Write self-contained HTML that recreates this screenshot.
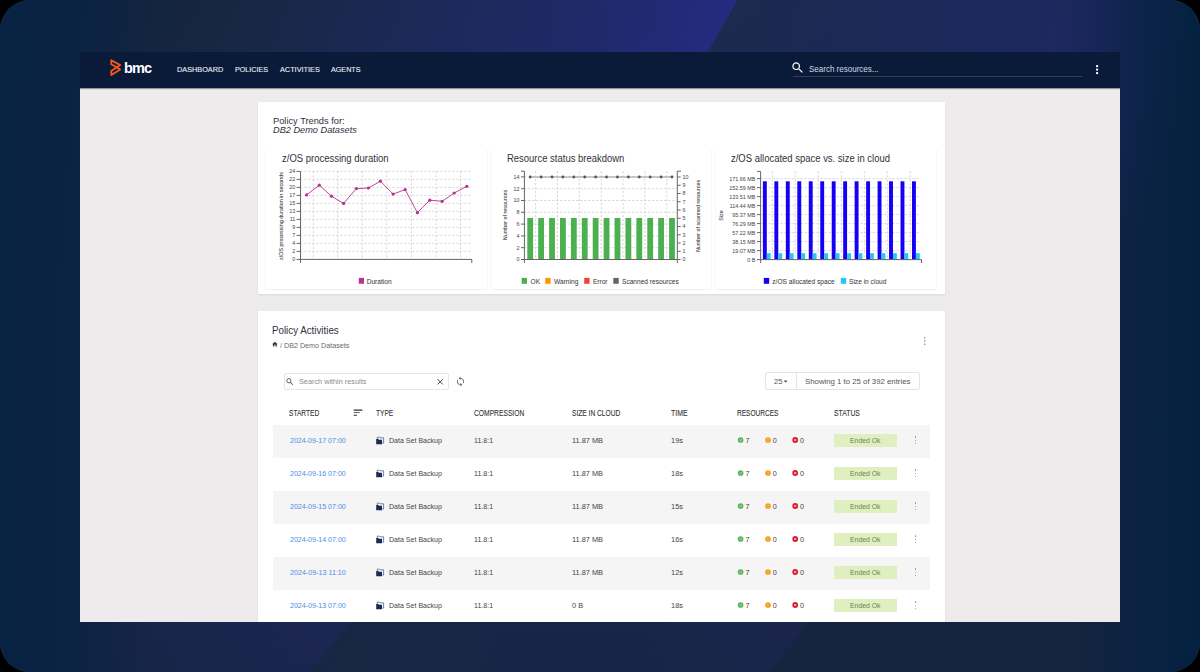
<!DOCTYPE html>
<html><head><meta charset="utf-8"><title>BMC AMI Cloud - Policy Activities</title>
<style>
html,body{margin:0;padding:0;background:#000;}
body{width:1200px;height:672px;overflow:hidden;position:relative;font-family:"Liberation Sans", sans-serif;}
#bg{position:absolute;left:0;top:0;width:1200px;height:672px;border-radius:30px;overflow:hidden;}
#screen{position:absolute;left:0;top:0;width:1200px;height:672px;clip-path:inset(52px 80px 50px 80px);}
svg text{font-family:"Liberation Sans", sans-serif;}
</style></head><body>
<div id="bg"><svg width="1200" height="672" viewBox="0 0 1200 672">
<defs>
<linearGradient id="g1" gradientUnits="userSpaceOnUse" x1="0" y1="0" x2="524" y2="335">
<stop offset="0" stop-color="#0d2140"/>
<stop offset="0.3" stop-color="#172640"/>
<stop offset="0.55" stop-color="#1c2855"/>
<stop offset="0.78" stop-color="#1f2966"/>
<stop offset="1" stop-color="#262a80"/>
</linearGradient>
<linearGradient id="g2" gradientUnits="userSpaceOnUse" x1="524" y1="335" x2="1175" y2="750">
<stop offset="0" stop-color="#1b2a4e"/>
<stop offset="0.2" stop-color="#1d2859"/>
<stop offset="0.35" stop-color="#1e285e"/>
<stop offset="0.5" stop-color="#23286e"/>
<stop offset="0.6" stop-color="#17243f"/>
<stop offset="1" stop-color="#0d2140"/>
</linearGradient>
<linearGradient id="g3" gradientUnits="userSpaceOnUse" x1="0" y1="420" x2="0" y2="622">
<stop offset="0" stop-color="#17243f" stop-opacity="0"/>
<stop offset="1" stop-color="#17243f" stop-opacity="1"/>
</linearGradient>
<linearGradient id="gv" gradientUnits="userSpaceOnUse" x1="0" y1="0" x2="0" y2="672">
<stop offset="0" stop-color="#17243f" stop-opacity="0"/>
<stop offset="0.5" stop-color="#17243f" stop-opacity="0.35"/>
<stop offset="1" stop-color="#17243f" stop-opacity="0.75"/>
</linearGradient>
<linearGradient id="gl" gradientUnits="userSpaceOnUse" x1="0" y1="0" x2="1200" y2="0">
<stop offset="0" stop-color="#082242" stop-opacity="1"/>
<stop offset="0.06" stop-color="#082242" stop-opacity="0.75"/>
<stop offset="0.13" stop-color="#082242" stop-opacity="0.1"/>
<stop offset="0.18" stop-color="#082242" stop-opacity="0"/>
<stop offset="0.88" stop-color="#082242" stop-opacity="0"/>
<stop offset="0.955" stop-color="#082242" stop-opacity="0.85"/>
<stop offset="1" stop-color="#04213f" stop-opacity="1"/>
</linearGradient>
</defs>
<rect x="0" y="0" width="1200" height="672" fill="#17243f"/>
<path d="M-500,0 L738,0 Q413,564 309,672 L-500,672 Z" fill="url(#g1)"/>
<path d="M738,0 L1300,0 L1300,672 L309,672 Q413,564 738,0 Z" fill="url(#g2)"/>
<path d="M1196,0 L1300,0 L1300,672 L767,672 Q871,564 1196,0 Z" fill="url(#g3)"/>
<rect x="0" y="0" width="1200" height="672" fill="url(#gv)"/>
<rect x="0" y="0" width="1200" height="672" fill="url(#gl)"/>
</svg></div>
<div id="screen">
<div style="position:absolute;left:80px;top:52px;width:1040px;height:570px;background:#edebeb;"></div>
<div style="position:absolute;left:80px;top:52px;width:1040px;height:36px;background:#0a1b3a;box-shadow:0 1px 1px rgba(0,0,0,0.35);"></div>
<svg style="position:absolute;left:0;top:0" width="1200" height="100" viewBox="0 0 1200 100">
<path d="M111.3,60.2 L120.2,65.1 L116.7,67.3 L111.3,64.3 Z M116.7,67.3 L120.2,69.5 L111.3,75.1 L111.3,70.9 Z" fill="none" stroke="#ff5514" stroke-width="1.8" stroke-linejoin="round"/>
<path transform="translate(790.5,60.5) scale(0.6)" fill="#fff" d="M15.5 14h-.79l-.28-.27C15.41 12.59 16 11.11 16 9.5 16 5.91 13.09 3 9.5 3S3 5.91 3 9.5 5.91 16 9.5 16c1.61 0 3.09-.59 4.23-1.57l.27.28v.79l5 4.99L20.49 19l-4.99-5zm-6 0C7.01 14 5 11.99 5 9.5S7.01 5 9.5 5 14 7.01 14 9.5 11.99 14 9.5 14z"/>
<rect x="793" y="76" width="289" height="1" fill="#343e5c"/>
<rect x="1096.1" y="65.1" width="2" height="2" fill="#fff"/>
<rect x="1096.1" y="68.6" width="2" height="2" fill="#fff"/>
<rect x="1096.1" y="72.1" width="2" height="2" fill="#fff"/>
</svg>
<div style="position:absolute;left:124.00px;top:59.58px;font-size:14.5px;color:#ffffff;font-weight:bold;font-style:normal;letter-spacing:-0.9px;white-space:nowrap;line-height:normal;">bmc</div>
<div style="position:absolute;left:177.00px;top:65.06px;font-size:8.0px;color:#eceef3;font-weight:normal;font-style:normal;letter-spacing:0px;white-space:nowrap;line-height:normal;transform:scaleX(0.9134);transform-origin:0 0;-webkit-text-stroke:0.12px #eceef3;">DASHBOARD</div>
<div style="position:absolute;left:234.70px;top:65.06px;font-size:8.0px;color:#eceef3;font-weight:normal;font-style:normal;letter-spacing:0px;white-space:nowrap;line-height:normal;transform:scaleX(0.8969);transform-origin:0 0;-webkit-text-stroke:0.12px #eceef3;">POLICIES</div>
<div style="position:absolute;left:279.70px;top:65.06px;font-size:8.0px;color:#eceef3;font-weight:normal;font-style:normal;letter-spacing:0px;white-space:nowrap;line-height:normal;transform:scaleX(0.9136);transform-origin:0 0;-webkit-text-stroke:0.12px #eceef3;">ACTIVITIES</div>
<div style="position:absolute;left:331.30px;top:65.06px;font-size:8.0px;color:#eceef3;font-weight:normal;font-style:normal;letter-spacing:0px;white-space:nowrap;line-height:normal;transform:scaleX(0.8965);transform-origin:0 0;-webkit-text-stroke:0.12px #eceef3;">AGENTS</div>
<div style="position:absolute;left:809.30px;top:63.52px;font-size:8.6px;color:#d6d9e1;font-weight:normal;font-style:normal;letter-spacing:0px;white-space:nowrap;line-height:normal;transform:scaleX(0.9327);transform-origin:0 0;">Search resources...</div>
<div style="position:absolute;left:258px;top:102px;width:687px;height:192px;background:#fff;box-shadow:0 1px 2px rgba(0,0,0,0.08);"></div>
<div style="position:absolute;left:272.80px;top:115.43px;font-size:9.8px;color:#30323a;font-weight:normal;font-style:normal;letter-spacing:0px;white-space:nowrap;line-height:normal;transform:scaleX(0.9460);transform-origin:0 0;">Policy Trends for:</div>
<div style="position:absolute;left:272.60px;top:123.83px;font-size:9.8px;color:#30323a;font-weight:normal;font-style:italic;letter-spacing:0px;white-space:nowrap;line-height:normal;transform:scaleX(0.9384);transform-origin:0 0;">DB2 Demo Datasets</div>
<div style="position:absolute;left:266px;top:148.5px;width:220.5px;height:140.8px;background:#fff;box-shadow:0 1px 1.5px rgba(0,0,0,0.07), 1px 0 1px rgba(0,0,0,0.02), -1px 0 1px rgba(0,0,0,0.02);"></div>
<div style="position:absolute;left:490.5px;top:148.5px;width:220.5px;height:140.8px;background:#fff;box-shadow:0 1px 1.5px rgba(0,0,0,0.07), 1px 0 1px rgba(0,0,0,0.02), -1px 0 1px rgba(0,0,0,0.02);"></div>
<div style="position:absolute;left:716px;top:148.5px;width:219.5px;height:140.8px;background:#fff;box-shadow:0 1px 1.5px rgba(0,0,0,0.07), 1px 0 1px rgba(0,0,0,0.02), -1px 0 1px rgba(0,0,0,0.02);"></div>
<div style="position:absolute;left:282.00px;top:152.95px;font-size:10.0px;color:#30323a;font-weight:normal;font-style:normal;letter-spacing:0px;white-space:nowrap;line-height:normal;transform:scaleX(0.9494);transform-origin:0 0;">z/OS processing duration</div>
<div style="position:absolute;left:506.60px;top:152.95px;font-size:10.0px;color:#30323a;font-weight:normal;font-style:normal;letter-spacing:0px;white-space:nowrap;line-height:normal;transform:scaleX(0.9462);transform-origin:0 0;">Resource status breakdown</div>
<div style="position:absolute;left:731.10px;top:152.95px;font-size:10.0px;color:#30323a;font-weight:normal;font-style:normal;letter-spacing:0px;white-space:nowrap;line-height:normal;transform:scaleX(0.9471);transform-origin:0 0;">z/OS allocated space vs. size in cloud</div>
<svg style="position:absolute;left:0;top:0" width="1200" height="300" viewBox="0 0 1200 300">
<line x1="300.5" y1="259.4" x2="470.6" y2="259.4" stroke="#c8c8c8" stroke-width="0.8" stroke-dasharray="2,2"/>
<line x1="296.6" y1="259.4" x2="300.5" y2="259.4" stroke="#666" stroke-width="1"/>
<text x="295.3" y="261.29999999999995" font-size="5.4" fill="#444" text-anchor="end">0</text>
<line x1="300.5" y1="251.39999999999998" x2="470.6" y2="251.39999999999998" stroke="#c8c8c8" stroke-width="0.8" stroke-dasharray="2,2"/>
<line x1="296.6" y1="251.39999999999998" x2="300.5" y2="251.39999999999998" stroke="#666" stroke-width="1"/>
<text x="295.3" y="253.29999999999998" font-size="5.4" fill="#444" text-anchor="end">2</text>
<line x1="300.5" y1="243.39999999999998" x2="470.6" y2="243.39999999999998" stroke="#c8c8c8" stroke-width="0.8" stroke-dasharray="2,2"/>
<line x1="296.6" y1="243.39999999999998" x2="300.5" y2="243.39999999999998" stroke="#666" stroke-width="1"/>
<text x="295.3" y="245.29999999999998" font-size="5.4" fill="#444" text-anchor="end">4</text>
<line x1="300.5" y1="235.39999999999998" x2="470.6" y2="235.39999999999998" stroke="#c8c8c8" stroke-width="0.8" stroke-dasharray="2,2"/>
<line x1="296.6" y1="235.39999999999998" x2="300.5" y2="235.39999999999998" stroke="#666" stroke-width="1"/>
<text x="295.3" y="237.29999999999998" font-size="5.4" fill="#444" text-anchor="end">7</text>
<line x1="300.5" y1="227.39999999999998" x2="470.6" y2="227.39999999999998" stroke="#c8c8c8" stroke-width="0.8" stroke-dasharray="2,2"/>
<line x1="296.6" y1="227.39999999999998" x2="300.5" y2="227.39999999999998" stroke="#666" stroke-width="1"/>
<text x="295.3" y="229.29999999999998" font-size="5.4" fill="#444" text-anchor="end">9</text>
<line x1="300.5" y1="219.39999999999998" x2="470.6" y2="219.39999999999998" stroke="#c8c8c8" stroke-width="0.8" stroke-dasharray="2,2"/>
<line x1="296.6" y1="219.39999999999998" x2="300.5" y2="219.39999999999998" stroke="#666" stroke-width="1"/>
<text x="295.3" y="221.29999999999998" font-size="5.4" fill="#444" text-anchor="end">11</text>
<line x1="300.5" y1="211.39999999999998" x2="470.6" y2="211.39999999999998" stroke="#c8c8c8" stroke-width="0.8" stroke-dasharray="2,2"/>
<line x1="296.6" y1="211.39999999999998" x2="300.5" y2="211.39999999999998" stroke="#666" stroke-width="1"/>
<text x="295.3" y="213.29999999999998" font-size="5.4" fill="#444" text-anchor="end">13</text>
<line x1="300.5" y1="203.39999999999998" x2="470.6" y2="203.39999999999998" stroke="#c8c8c8" stroke-width="0.8" stroke-dasharray="2,2"/>
<line x1="296.6" y1="203.39999999999998" x2="300.5" y2="203.39999999999998" stroke="#666" stroke-width="1"/>
<text x="295.3" y="205.29999999999998" font-size="5.4" fill="#444" text-anchor="end">15</text>
<line x1="300.5" y1="195.39999999999998" x2="470.6" y2="195.39999999999998" stroke="#c8c8c8" stroke-width="0.8" stroke-dasharray="2,2"/>
<line x1="296.6" y1="195.39999999999998" x2="300.5" y2="195.39999999999998" stroke="#666" stroke-width="1"/>
<text x="295.3" y="197.29999999999998" font-size="5.4" fill="#444" text-anchor="end">17</text>
<line x1="300.5" y1="187.39999999999998" x2="470.6" y2="187.39999999999998" stroke="#c8c8c8" stroke-width="0.8" stroke-dasharray="2,2"/>
<line x1="296.6" y1="187.39999999999998" x2="300.5" y2="187.39999999999998" stroke="#666" stroke-width="1"/>
<text x="295.3" y="189.29999999999998" font-size="5.4" fill="#444" text-anchor="end">20</text>
<line x1="300.5" y1="179.39999999999998" x2="470.6" y2="179.39999999999998" stroke="#c8c8c8" stroke-width="0.8" stroke-dasharray="2,2"/>
<line x1="296.6" y1="179.39999999999998" x2="300.5" y2="179.39999999999998" stroke="#666" stroke-width="1"/>
<text x="295.3" y="181.29999999999998" font-size="5.4" fill="#444" text-anchor="end">22</text>
<line x1="300.5" y1="171.39999999999998" x2="470.6" y2="171.39999999999998" stroke="#c8c8c8" stroke-width="0.8" stroke-dasharray="2,2"/>
<line x1="296.6" y1="171.39999999999998" x2="300.5" y2="171.39999999999998" stroke="#666" stroke-width="1"/>
<text x="295.3" y="173.29999999999998" font-size="5.4" fill="#444" text-anchor="end">24</text>
<line x1="313.3" y1="171.4" x2="313.3" y2="259.4" stroke="#c8c8c8" stroke-width="0.8" stroke-dasharray="2,2"/>
<line x1="337.8" y1="171.4" x2="337.8" y2="259.4" stroke="#c8c8c8" stroke-width="0.8" stroke-dasharray="2,2"/>
<line x1="362.3" y1="171.4" x2="362.3" y2="259.4" stroke="#c8c8c8" stroke-width="0.8" stroke-dasharray="2,2"/>
<line x1="386.9" y1="171.4" x2="386.9" y2="259.4" stroke="#c8c8c8" stroke-width="0.8" stroke-dasharray="2,2"/>
<line x1="411.4" y1="171.4" x2="411.4" y2="259.4" stroke="#c8c8c8" stroke-width="0.8" stroke-dasharray="2,2"/>
<line x1="436.0" y1="171.4" x2="436.0" y2="259.4" stroke="#c8c8c8" stroke-width="0.8" stroke-dasharray="2,2"/>
<line x1="460.5" y1="171.4" x2="460.5" y2="259.4" stroke="#c8c8c8" stroke-width="0.8" stroke-dasharray="2,2"/>
<line x1="300.5" y1="171.4" x2="300.5" y2="263" stroke="#666" stroke-width="1"/>
<line x1="300" y1="259.4" x2="472" y2="259.4" stroke="#666" stroke-width="1"/>
<line x1="471.8" y1="259.4" x2="471.8" y2="263" stroke="#666" stroke-width="1"/>
<polyline points="306.6,194.9 319.3,185.2 331.5,196.2 343.6,203.4 356.3,188.6 368.5,188 380.4,181.2 393.1,194.1 405.1,189.6 417.4,212.7 429.8,200.2 442.1,201.3 454.2,193 466.8,186.3" fill="none" stroke="#b8318f" stroke-width="0.9"/>
<circle cx="306.6" cy="194.9" r="1.6" fill="#b8318f"/>
<circle cx="319.3" cy="185.2" r="1.6" fill="#b8318f"/>
<circle cx="331.5" cy="196.2" r="1.6" fill="#b8318f"/>
<circle cx="343.6" cy="203.4" r="1.6" fill="#b8318f"/>
<circle cx="356.3" cy="188.6" r="1.6" fill="#b8318f"/>
<circle cx="368.5" cy="188" r="1.6" fill="#b8318f"/>
<circle cx="380.4" cy="181.2" r="1.6" fill="#b8318f"/>
<circle cx="393.1" cy="194.1" r="1.6" fill="#b8318f"/>
<circle cx="405.1" cy="189.6" r="1.6" fill="#b8318f"/>
<circle cx="417.4" cy="212.7" r="1.6" fill="#b8318f"/>
<circle cx="429.8" cy="200.2" r="1.6" fill="#b8318f"/>
<circle cx="442.1" cy="201.3" r="1.6" fill="#b8318f"/>
<circle cx="454.2" cy="193" r="1.6" fill="#b8318f"/>
<circle cx="466.8" cy="186.3" r="1.6" fill="#b8318f"/>
<text transform="translate(282.6,216) rotate(-90)" font-size="5.4" fill="#222" text-anchor="middle">z/OS processing duration in seconds</text>
<rect x="358.8" y="277.9" width="5.2" height="5.8" fill="#b8318f"/>
<text x="366.7" y="284" font-size="6.6" fill="#333" text-anchor="start">Duration</text>
<line x1="524.4" y1="259.5" x2="677.3" y2="259.5" stroke="#c8c8c8" stroke-width="0.8" stroke-dasharray="2,2"/>
<line x1="521" y1="259.5" x2="524.4" y2="259.5" stroke="#666" stroke-width="1"/>
<text x="519.5" y="261.4" font-size="5.4" fill="#444" text-anchor="end">0</text>
<line x1="524.4" y1="247.7" x2="677.3" y2="247.7" stroke="#c8c8c8" stroke-width="0.8" stroke-dasharray="2,2"/>
<line x1="521" y1="247.7" x2="524.4" y2="247.7" stroke="#666" stroke-width="1"/>
<text x="519.5" y="249.6" font-size="5.4" fill="#444" text-anchor="end">2</text>
<line x1="524.4" y1="235.9" x2="677.3" y2="235.9" stroke="#c8c8c8" stroke-width="0.8" stroke-dasharray="2,2"/>
<line x1="521" y1="235.9" x2="524.4" y2="235.9" stroke="#666" stroke-width="1"/>
<text x="519.5" y="237.8" font-size="5.4" fill="#444" text-anchor="end">4</text>
<line x1="524.4" y1="224.1" x2="677.3" y2="224.1" stroke="#c8c8c8" stroke-width="0.8" stroke-dasharray="2,2"/>
<line x1="521" y1="224.1" x2="524.4" y2="224.1" stroke="#666" stroke-width="1"/>
<text x="519.5" y="226.0" font-size="5.4" fill="#444" text-anchor="end">6</text>
<line x1="524.4" y1="212.3" x2="677.3" y2="212.3" stroke="#c8c8c8" stroke-width="0.8" stroke-dasharray="2,2"/>
<line x1="521" y1="212.3" x2="524.4" y2="212.3" stroke="#666" stroke-width="1"/>
<text x="519.5" y="214.20000000000002" font-size="5.4" fill="#444" text-anchor="end">8</text>
<line x1="524.4" y1="200.5" x2="677.3" y2="200.5" stroke="#c8c8c8" stroke-width="0.8" stroke-dasharray="2,2"/>
<line x1="521" y1="200.5" x2="524.4" y2="200.5" stroke="#666" stroke-width="1"/>
<text x="519.5" y="202.4" font-size="5.4" fill="#444" text-anchor="end">10</text>
<line x1="524.4" y1="188.7" x2="677.3" y2="188.7" stroke="#c8c8c8" stroke-width="0.8" stroke-dasharray="2,2"/>
<line x1="521" y1="188.7" x2="524.4" y2="188.7" stroke="#666" stroke-width="1"/>
<text x="519.5" y="190.6" font-size="5.4" fill="#444" text-anchor="end">12</text>
<line x1="524.4" y1="176.89999999999998" x2="677.3" y2="176.89999999999998" stroke="#c8c8c8" stroke-width="0.8" stroke-dasharray="2,2"/>
<line x1="521" y1="176.89999999999998" x2="524.4" y2="176.89999999999998" stroke="#666" stroke-width="1"/>
<text x="519.5" y="178.79999999999998" font-size="5.4" fill="#444" text-anchor="end">14</text>
<line x1="677.3" y1="259.5" x2="680.7" y2="259.5" stroke="#666" stroke-width="1"/>
<text x="682.5" y="261.4" font-size="5.4" fill="#444" text-anchor="start">0</text>
<line x1="677.3" y1="251.25" x2="680.7" y2="251.25" stroke="#666" stroke-width="1"/>
<text x="682.5" y="253.15" font-size="5.4" fill="#444" text-anchor="start">1</text>
<line x1="677.3" y1="243.0" x2="680.7" y2="243.0" stroke="#666" stroke-width="1"/>
<text x="682.5" y="244.9" font-size="5.4" fill="#444" text-anchor="start">2</text>
<line x1="677.3" y1="234.75" x2="680.7" y2="234.75" stroke="#666" stroke-width="1"/>
<text x="682.5" y="236.65" font-size="5.4" fill="#444" text-anchor="start">3</text>
<line x1="677.3" y1="226.5" x2="680.7" y2="226.5" stroke="#666" stroke-width="1"/>
<text x="682.5" y="228.4" font-size="5.4" fill="#444" text-anchor="start">4</text>
<line x1="677.3" y1="218.25" x2="680.7" y2="218.25" stroke="#666" stroke-width="1"/>
<text x="682.5" y="220.15" font-size="5.4" fill="#444" text-anchor="start">5</text>
<line x1="677.3" y1="210.0" x2="680.7" y2="210.0" stroke="#666" stroke-width="1"/>
<text x="682.5" y="211.9" font-size="5.4" fill="#444" text-anchor="start">6</text>
<line x1="677.3" y1="201.75" x2="680.7" y2="201.75" stroke="#666" stroke-width="1"/>
<text x="682.5" y="203.65" font-size="5.4" fill="#444" text-anchor="start">7</text>
<line x1="677.3" y1="193.5" x2="680.7" y2="193.5" stroke="#666" stroke-width="1"/>
<text x="682.5" y="195.4" font-size="5.4" fill="#444" text-anchor="start">8</text>
<line x1="677.3" y1="185.25" x2="680.7" y2="185.25" stroke="#666" stroke-width="1"/>
<text x="682.5" y="187.15" font-size="5.4" fill="#444" text-anchor="start">9</text>
<line x1="677.3" y1="177.0" x2="680.7" y2="177.0" stroke="#666" stroke-width="1"/>
<text x="682.5" y="178.9" font-size="5.4" fill="#444" text-anchor="start">10</text>
<line x1="535.6" y1="171.2" x2="535.6" y2="259.5" stroke="#c8c8c8" stroke-width="0.8" stroke-dasharray="2,2"/>
<line x1="557.47" y1="171.2" x2="557.47" y2="259.5" stroke="#c8c8c8" stroke-width="0.8" stroke-dasharray="2,2"/>
<line x1="579.34" y1="171.2" x2="579.34" y2="259.5" stroke="#c8c8c8" stroke-width="0.8" stroke-dasharray="2,2"/>
<line x1="601.21" y1="171.2" x2="601.21" y2="259.5" stroke="#c8c8c8" stroke-width="0.8" stroke-dasharray="2,2"/>
<line x1="623.08" y1="171.2" x2="623.08" y2="259.5" stroke="#c8c8c8" stroke-width="0.8" stroke-dasharray="2,2"/>
<line x1="644.95" y1="171.2" x2="644.95" y2="259.5" stroke="#c8c8c8" stroke-width="0.8" stroke-dasharray="2,2"/>
<line x1="666.82" y1="171.2" x2="666.82" y2="259.5" stroke="#c8c8c8" stroke-width="0.8" stroke-dasharray="2,2"/>
<rect x="527.30" y="218" width="5.8" height="41.5" fill="#4caf50"/>
<rect x="538.21" y="218" width="5.8" height="41.5" fill="#4caf50"/>
<rect x="549.12" y="218" width="5.8" height="41.5" fill="#4caf50"/>
<rect x="560.02" y="218" width="5.8" height="41.5" fill="#4caf50"/>
<rect x="570.93" y="218" width="5.8" height="41.5" fill="#4caf50"/>
<rect x="581.84" y="218" width="5.8" height="41.5" fill="#4caf50"/>
<rect x="592.75" y="218" width="5.8" height="41.5" fill="#4caf50"/>
<rect x="603.65" y="218" width="5.8" height="41.5" fill="#4caf50"/>
<rect x="614.56" y="218" width="5.8" height="41.5" fill="#4caf50"/>
<rect x="625.47" y="218" width="5.8" height="41.5" fill="#4caf50"/>
<rect x="636.38" y="218" width="5.8" height="41.5" fill="#4caf50"/>
<rect x="647.28" y="218" width="5.8" height="41.5" fill="#4caf50"/>
<rect x="658.19" y="218" width="5.8" height="41.5" fill="#4caf50"/>
<rect x="669.10" y="218" width="5.8" height="41.5" fill="#4caf50"/>
<line x1="530.2" y1="177" x2="672" y2="177" stroke="#999" stroke-width="1"/>
<circle cx="530.20" cy="177" r="1.4" fill="#555"/>
<circle cx="541.11" cy="177" r="1.4" fill="#555"/>
<circle cx="552.02" cy="177" r="1.4" fill="#555"/>
<circle cx="562.92" cy="177" r="1.4" fill="#555"/>
<circle cx="573.83" cy="177" r="1.4" fill="#555"/>
<circle cx="584.74" cy="177" r="1.4" fill="#555"/>
<circle cx="595.65" cy="177" r="1.4" fill="#555"/>
<circle cx="606.55" cy="177" r="1.4" fill="#555"/>
<circle cx="617.46" cy="177" r="1.4" fill="#555"/>
<circle cx="628.37" cy="177" r="1.4" fill="#555"/>
<circle cx="639.28" cy="177" r="1.4" fill="#555"/>
<circle cx="650.18" cy="177" r="1.4" fill="#555"/>
<circle cx="661.09" cy="177" r="1.4" fill="#555"/>
<circle cx="672.00" cy="177" r="1.4" fill="#555"/>
<line x1="524.4" y1="171.2" x2="524.4" y2="263" stroke="#666" stroke-width="1"/>
<line x1="521" y1="171.2" x2="524.4" y2="171.2" stroke="#666" stroke-width="1"/>
<line x1="677.3" y1="171.2" x2="677.3" y2="263" stroke="#666" stroke-width="1"/>
<line x1="677.3" y1="171.2" x2="681" y2="171.2" stroke="#666" stroke-width="1"/>
<line x1="524.4" y1="259.5" x2="677.3" y2="259.5" stroke="#666" stroke-width="1"/>
<text transform="translate(506.8,215) rotate(-90)" font-size="5.4" fill="#222" text-anchor="middle">Number of resources</text>
<text transform="translate(700.4,216) rotate(-90)" font-size="5.4" fill="#222" text-anchor="middle">Number of scanned resources</text>
<rect x="521.6" y="277.9" width="5.4" height="5.9" fill="#4caf50"/>
<text x="530.5" y="284" font-size="6.6" fill="#333" text-anchor="start">OK</text>
<rect x="545.2" y="277.9" width="5.4" height="5.9" fill="#ff9800"/>
<text x="554" y="284" font-size="6.6" fill="#333" text-anchor="start">Warning</text>
<rect x="584.2" y="277.9" width="5.4" height="5.9" fill="#f44336"/>
<text x="592.9" y="284" font-size="6.6" fill="#333" text-anchor="start">Error</text>
<rect x="613.3" y="277.9" width="5.4" height="5.9" fill="#666"/>
<text x="622" y="284" font-size="6.6" fill="#333" text-anchor="start">Scanned resources</text>
<line x1="760.6" y1="259.6" x2="921" y2="259.6" stroke="#c8c8c8" stroke-width="0.8" stroke-dasharray="2,2"/>
<line x1="757" y1="259.6" x2="760.6" y2="259.6" stroke="#666" stroke-width="1"/>
<text x="755.3" y="261.5" font-size="5.4" fill="#444" text-anchor="end">0 B</text>
<line x1="760.6" y1="250.60000000000002" x2="921" y2="250.60000000000002" stroke="#c8c8c8" stroke-width="0.8" stroke-dasharray="2,2"/>
<line x1="757" y1="250.60000000000002" x2="760.6" y2="250.60000000000002" stroke="#666" stroke-width="1"/>
<text x="755.3" y="252.50000000000003" font-size="5.4" fill="#444" text-anchor="end">19.07 MB</text>
<line x1="760.6" y1="241.60000000000002" x2="921" y2="241.60000000000002" stroke="#c8c8c8" stroke-width="0.8" stroke-dasharray="2,2"/>
<line x1="757" y1="241.60000000000002" x2="760.6" y2="241.60000000000002" stroke="#666" stroke-width="1"/>
<text x="755.3" y="243.50000000000003" font-size="5.4" fill="#444" text-anchor="end">38.15 MB</text>
<line x1="760.6" y1="232.60000000000002" x2="921" y2="232.60000000000002" stroke="#c8c8c8" stroke-width="0.8" stroke-dasharray="2,2"/>
<line x1="757" y1="232.60000000000002" x2="760.6" y2="232.60000000000002" stroke="#666" stroke-width="1"/>
<text x="755.3" y="234.50000000000003" font-size="5.4" fill="#444" text-anchor="end">57.22 MB</text>
<line x1="760.6" y1="223.60000000000002" x2="921" y2="223.60000000000002" stroke="#c8c8c8" stroke-width="0.8" stroke-dasharray="2,2"/>
<line x1="757" y1="223.60000000000002" x2="760.6" y2="223.60000000000002" stroke="#666" stroke-width="1"/>
<text x="755.3" y="225.50000000000003" font-size="5.4" fill="#444" text-anchor="end">76.29 MB</text>
<line x1="760.6" y1="214.60000000000002" x2="921" y2="214.60000000000002" stroke="#c8c8c8" stroke-width="0.8" stroke-dasharray="2,2"/>
<line x1="757" y1="214.60000000000002" x2="760.6" y2="214.60000000000002" stroke="#666" stroke-width="1"/>
<text x="755.3" y="216.50000000000003" font-size="5.4" fill="#444" text-anchor="end">95.37 MB</text>
<line x1="760.6" y1="205.60000000000002" x2="921" y2="205.60000000000002" stroke="#c8c8c8" stroke-width="0.8" stroke-dasharray="2,2"/>
<line x1="757" y1="205.60000000000002" x2="760.6" y2="205.60000000000002" stroke="#666" stroke-width="1"/>
<text x="755.3" y="207.50000000000003" font-size="5.4" fill="#444" text-anchor="end">114.44 MB</text>
<line x1="760.6" y1="196.60000000000002" x2="921" y2="196.60000000000002" stroke="#c8c8c8" stroke-width="0.8" stroke-dasharray="2,2"/>
<line x1="757" y1="196.60000000000002" x2="760.6" y2="196.60000000000002" stroke="#666" stroke-width="1"/>
<text x="755.3" y="198.50000000000003" font-size="5.4" fill="#444" text-anchor="end">133.51 MB</text>
<line x1="760.6" y1="187.60000000000002" x2="921" y2="187.60000000000002" stroke="#c8c8c8" stroke-width="0.8" stroke-dasharray="2,2"/>
<line x1="757" y1="187.60000000000002" x2="760.6" y2="187.60000000000002" stroke="#666" stroke-width="1"/>
<text x="755.3" y="189.50000000000003" font-size="5.4" fill="#444" text-anchor="end">152.59 MB</text>
<line x1="760.6" y1="178.60000000000002" x2="921" y2="178.60000000000002" stroke="#c8c8c8" stroke-width="0.8" stroke-dasharray="2,2"/>
<line x1="757" y1="178.60000000000002" x2="760.6" y2="178.60000000000002" stroke="#666" stroke-width="1"/>
<text x="755.3" y="180.50000000000003" font-size="5.4" fill="#444" text-anchor="end">171.66 MB</text>
<line x1="772.3" y1="171.4" x2="772.3" y2="259.6" stroke="#c8c8c8" stroke-width="0.8" stroke-dasharray="2,2"/>
<line x1="795.3" y1="171.4" x2="795.3" y2="259.6" stroke="#c8c8c8" stroke-width="0.8" stroke-dasharray="2,2"/>
<line x1="818.3" y1="171.4" x2="818.3" y2="259.6" stroke="#c8c8c8" stroke-width="0.8" stroke-dasharray="2,2"/>
<line x1="841.3" y1="171.4" x2="841.3" y2="259.6" stroke="#c8c8c8" stroke-width="0.8" stroke-dasharray="2,2"/>
<line x1="864.3" y1="171.4" x2="864.3" y2="259.6" stroke="#c8c8c8" stroke-width="0.8" stroke-dasharray="2,2"/>
<line x1="887.3" y1="171.4" x2="887.3" y2="259.6" stroke="#c8c8c8" stroke-width="0.8" stroke-dasharray="2,2"/>
<line x1="910.3" y1="171.4" x2="910.3" y2="259.6" stroke="#c8c8c8" stroke-width="0.8" stroke-dasharray="2,2"/>
<rect x="762.90" y="181.3" width="3.9" height="78.3" fill="#1500f5"/>
<rect x="766.80" y="253.2" width="3.9" height="6.4" fill="#29c6f5"/>
<rect x="774.37" y="181.3" width="3.9" height="78.3" fill="#1500f5"/>
<rect x="778.27" y="253.2" width="3.9" height="6.4" fill="#29c6f5"/>
<rect x="785.84" y="181.3" width="3.9" height="78.3" fill="#1500f5"/>
<rect x="789.74" y="253.2" width="3.9" height="6.4" fill="#29c6f5"/>
<rect x="797.31" y="181.3" width="3.9" height="78.3" fill="#1500f5"/>
<rect x="801.21" y="253.2" width="3.9" height="6.4" fill="#29c6f5"/>
<rect x="808.78" y="181.3" width="3.9" height="78.3" fill="#1500f5"/>
<rect x="812.68" y="253.2" width="3.9" height="6.4" fill="#29c6f5"/>
<rect x="820.25" y="181.3" width="3.9" height="78.3" fill="#1500f5"/>
<rect x="824.15" y="253.2" width="3.9" height="6.4" fill="#29c6f5"/>
<rect x="831.72" y="181.3" width="3.9" height="78.3" fill="#1500f5"/>
<rect x="835.62" y="253.2" width="3.9" height="6.4" fill="#29c6f5"/>
<rect x="843.18" y="181.3" width="3.9" height="78.3" fill="#1500f5"/>
<rect x="847.08" y="253.2" width="3.9" height="6.4" fill="#29c6f5"/>
<rect x="854.65" y="181.3" width="3.9" height="78.3" fill="#1500f5"/>
<rect x="858.55" y="253.2" width="3.9" height="6.4" fill="#29c6f5"/>
<rect x="866.12" y="181.3" width="3.9" height="78.3" fill="#1500f5"/>
<rect x="870.02" y="253.2" width="3.9" height="6.4" fill="#29c6f5"/>
<rect x="877.59" y="181.3" width="3.9" height="78.3" fill="#1500f5"/>
<rect x="881.49" y="253.2" width="3.9" height="6.4" fill="#29c6f5"/>
<rect x="889.06" y="181.3" width="3.9" height="78.3" fill="#1500f5"/>
<rect x="892.96" y="253.2" width="3.9" height="6.4" fill="#29c6f5"/>
<rect x="900.53" y="181.3" width="3.9" height="78.3" fill="#1500f5"/>
<rect x="904.43" y="253.2" width="3.9" height="6.4" fill="#29c6f5"/>
<rect x="912.00" y="181.3" width="3.9" height="78.3" fill="#1500f5"/>
<rect x="915.90" y="253.2" width="3.9" height="6.4" fill="#29c6f5"/>
<line x1="760.6" y1="171.4" x2="760.6" y2="263" stroke="#666" stroke-width="1"/>
<line x1="757" y1="171.4" x2="760.6" y2="171.4" stroke="#666" stroke-width="1"/>
<line x1="760.6" y1="259.6" x2="921.5" y2="259.6" stroke="#666" stroke-width="1"/>
<line x1="921.5" y1="259.6" x2="921.5" y2="263" stroke="#666" stroke-width="1"/>
<text transform="translate(722.6,215.5) rotate(-90)" font-size="5.4" fill="#222" text-anchor="middle">Size</text>
<rect x="763.8" y="277.9" width="5.4" height="5.9" fill="#1500f5"/>
<text x="772.3" y="284" font-size="6.6" fill="#333" text-anchor="start">z/OS allocated space</text>
<rect x="840.8" y="277.9" width="5.4" height="5.9" fill="#29c6f5"/>
<text x="849" y="284" font-size="6.6" fill="#333" text-anchor="start">Size in cloud</text>
</svg>
<div style="position:absolute;left:258px;top:311px;width:687px;height:320px;background:#fff;box-shadow:0 1px 2px rgba(0,0,0,0.08);"></div>
<div style="position:absolute;left:272.30px;top:323.70px;font-size:10.5px;color:#30323a;font-weight:normal;font-style:normal;letter-spacing:0px;white-space:nowrap;line-height:normal;transform:scaleX(0.9292);transform-origin:0 0;">Policy Activities</div>
<div style="position:absolute;left:280.00px;top:340.82px;font-size:7.6px;color:#6a6a6a;font-weight:normal;font-style:normal;letter-spacing:0px;white-space:nowrap;line-height:normal;transform:scaleX(0.9437);transform-origin:0 0;">/ DB2 Demo Datasets</div>
<div style="position:absolute;left:283.5px;top:372.5px;width:165.2px;height:17.7px;box-sizing:border-box;border:1px solid #e6e6e6;border-radius:2px;background:#fff;"></div>
<svg style="position:absolute;left:0;top:300px" width="1200" height="372" viewBox="0 300 1200 372"><path transform="translate(271.54,340.91) scale(0.28)" fill="#3a3a3a" d="M10 20v-6h4v6h5v-8h3L12 3 2 12h3v8z"/><circle cx="924.7" cy="338.0" r="0.8" fill="#8a8a8a"/><circle cx="924.7" cy="341.1" r="0.8" fill="#8a8a8a"/><circle cx="924.7" cy="344.2" r="0.8" fill="#8a8a8a"/><path transform="translate(285.29,377.19) scale(0.38)" fill="#444" d="M15.5 14h-.79l-.28-.27C15.41 12.59 16 11.11 16 9.5 16 5.91 13.09 3 9.5 3S3 5.91 3 9.5 5.91 16 9.5 16c1.61 0 3.09-.59 4.23-1.57l.27.28v.79l5 4.99L20.49 19l-4.99-5zm-6 0C7.01 14 5 11.99 5 9.5S7.01 5 9.5 5 14 7.01 14 9.5 11.99 14 9.5 14z"/><path d="M437.6,379.2 L442.8,384.4 M442.8,379.2 L437.6,384.4" stroke="#444" stroke-width="1"/><path transform="translate(455.1,376.1) scale(0.45)" fill="#6a6a6a" d="M12 4V1L8 5l4 4V6c3.31 0 6 2.69 6 6 0 1.01-.25 1.97-.7 2.8l1.46 1.46C19.54 15.03 20 13.57 20 12c0-4.42-3.58-8-8-8zm0 14c-3.31 0-6-2.69-6-6 0-1.01.25-1.97.7-2.8L5.24 7.74C4.46 8.97 4 10.43 4 12c0 4.42 3.58 8 8 8v3l4-4-4-4v3z"/></svg>
<div style="position:absolute;left:299.20px;top:376.92px;font-size:7.6px;color:#8a8a8a;font-weight:normal;font-style:normal;letter-spacing:0px;white-space:nowrap;line-height:normal;transform:scaleX(0.9606);transform-origin:0 0;">Search within results</div>
<div style="position:absolute;left:765.0px;top:372.2px;width:154.8px;height:18.3px;box-sizing:border-box;border:1px solid #e4e4e4;border-radius:2px;background:#fff;"></div>
<div style="position:absolute;left:796.2px;top:372.2px;width:1px;height:18.3px;background:#e4e4e4;"></div>
<div style="position:absolute;left:773.80px;top:377.06px;font-size:8.0px;color:#555;font-weight:normal;font-style:normal;letter-spacing:0px;white-space:nowrap;line-height:normal;transform:scaleX(0.9544);transform-origin:0 0;">25</div>
<svg style="position:absolute;left:783px;top:380px" width="6" height="4"><path d="M0.6,0.6 L4.6,0.6 L2.6,2.7 Z" fill="#555"/></svg>
<div style="position:absolute;left:805.00px;top:377.06px;font-size:8.0px;color:#555;font-weight:normal;font-style:normal;letter-spacing:0px;white-space:nowrap;line-height:normal;transform:scaleX(0.9752);transform-origin:0 0;">Showing 1 to 25 of 392 entries</div>
<div style="position:absolute;left:289.30px;top:408.58px;font-size:8.2px;color:#333;font-weight:normal;font-style:normal;letter-spacing:0px;white-space:nowrap;line-height:normal;transform:scaleX(0.8060);transform-origin:0 0;-webkit-text-stroke:0.1px #333;">STARTED</div>
<div style="position:absolute;left:376.20px;top:408.58px;font-size:8.2px;color:#333;font-weight:normal;font-style:normal;letter-spacing:0px;white-space:nowrap;line-height:normal;transform:scaleX(0.8041);transform-origin:0 0;-webkit-text-stroke:0.1px #333;">TYPE</div>
<div style="position:absolute;left:474.00px;top:408.58px;font-size:8.2px;color:#333;font-weight:normal;font-style:normal;letter-spacing:0px;white-space:nowrap;line-height:normal;transform:scaleX(0.8189);transform-origin:0 0;-webkit-text-stroke:0.1px #333;">COMPRESSION</div>
<div style="position:absolute;left:572.00px;top:408.58px;font-size:8.2px;color:#333;font-weight:normal;font-style:normal;letter-spacing:0px;white-space:nowrap;line-height:normal;transform:scaleX(0.8103);transform-origin:0 0;-webkit-text-stroke:0.1px #333;">SIZE IN CLOUD</div>
<div style="position:absolute;left:671.30px;top:408.58px;font-size:8.2px;color:#333;font-weight:normal;font-style:normal;letter-spacing:0px;white-space:nowrap;line-height:normal;transform:scaleX(0.8435);transform-origin:0 0;-webkit-text-stroke:0.1px #333;">TIME</div>
<div style="position:absolute;left:737.00px;top:408.58px;font-size:8.2px;color:#333;font-weight:normal;font-style:normal;letter-spacing:0px;white-space:nowrap;line-height:normal;transform:scaleX(0.7981);transform-origin:0 0;-webkit-text-stroke:0.1px #333;">RESOURCES</div>
<div style="position:absolute;left:833.70px;top:408.58px;font-size:8.2px;color:#333;font-weight:normal;font-style:normal;letter-spacing:0px;white-space:nowrap;line-height:normal;transform:scaleX(0.8330);transform-origin:0 0;-webkit-text-stroke:0.1px #333;">STATUS</div>
<svg style="position:absolute;left:353px;top:408px" width="11" height="9"><rect x="0.7" y="1.4" width="8.6" height="1.5" fill="#505050"/><rect x="0.7" y="4" width="6" height="1" fill="#666"/><rect x="0.7" y="6.6" width="3.2" height="1.3" fill="#555"/></svg>
<div style="position:absolute;left:273px;top:424.5px;width:657px;height:33px;background:#f5f5f5;"></div>
<div style="position:absolute;left:289.50px;top:436.35px;font-size:7.9px;color:#4a90e2;font-weight:normal;font-style:normal;letter-spacing:0px;white-space:nowrap;line-height:normal;transform:scaleX(0.8955);transform-origin:0 0;">2024-09-17 07:00</div>
<svg style="position:absolute;left:375px;top:435.5px" width="10" height="10"><path d="M2.3,3.2 L2.3,1.1 L4.3,1.1 L5,1.8 L8.6,1.8 L8.6,7.1 L7.3,7.1" fill="none" stroke="#59608a" stroke-width="0.8"/><path d="M1.2,3 L3.3,3 L4,3.7 L7,3.7 L7,8.2 L1.2,8.2 Z" fill="#1c2a5a"/></svg>
<div style="position:absolute;left:389.00px;top:436.35px;font-size:7.9px;color:#444;font-weight:normal;font-style:normal;letter-spacing:0px;white-space:nowrap;line-height:normal;transform:scaleX(0.8933);transform-origin:0 0;">Data Set Backup</div>
<div style="position:absolute;left:474.20px;top:436.35px;font-size:7.9px;color:#444;font-weight:normal;font-style:normal;letter-spacing:0px;white-space:nowrap;line-height:normal;transform:scaleX(0.8942);transform-origin:0 0;">11.8:1</div>
<div style="position:absolute;left:572.00px;top:436.35px;font-size:7.9px;color:#444;font-weight:normal;font-style:normal;letter-spacing:0px;white-space:nowrap;line-height:normal;transform:scaleX(0.9336);transform-origin:0 0;">11.87 MB</div>
<div style="position:absolute;left:671.30px;top:436.35px;font-size:7.9px;color:#444;font-weight:normal;font-style:normal;letter-spacing:0px;white-space:nowrap;line-height:normal;transform:scaleX(0.9423);transform-origin:0 0;">19s</div>
<svg style="position:absolute;left:735px;top:435.20px" width="70" height="10"><circle cx="5.6" cy="5" r="2.85" fill="#5cb85c"/><path d="M4.4,5 L5.3,5.9 L6.9,4.2" fill="none" stroke="#d8f0d8" stroke-width="0.6"/><circle cx="33" cy="5" r="2.85" fill="#f5a01a"/><path d="M33,3.6 L33,5.4 M33,6.1 L33,6.6" stroke="#ffe3b0" stroke-width="0.6"/><circle cx="60.2" cy="5" r="2.9" fill="#e3182a"/><path d="M59.3,4.1 L61.1,5.9 M61.1,4.1 L59.3,5.9" stroke="#fff" stroke-width="0.75"/></svg>
<div style="position:absolute;left:745.50px;top:436.28px;font-size:7.2px;color:#444;font-weight:normal;font-style:normal;letter-spacing:0px;white-space:nowrap;line-height:normal;">7</div>
<div style="position:absolute;left:772.80px;top:436.28px;font-size:7.2px;color:#444;font-weight:normal;font-style:normal;letter-spacing:0px;white-space:nowrap;line-height:normal;">0</div>
<div style="position:absolute;left:800.00px;top:436.28px;font-size:7.2px;color:#444;font-weight:normal;font-style:normal;letter-spacing:0px;white-space:nowrap;line-height:normal;">0</div>
<div style="position:absolute;left:833.7px;top:433.9px;width:63.3px;height:13.4px;background:#e0efc0;"></div>
<div style="position:absolute;left:849.80px;top:436.35px;font-size:7.9px;color:#6c8450;font-weight:normal;font-style:normal;letter-spacing:0px;white-space:nowrap;line-height:normal;transform:scaleX(0.8691);transform-origin:0 0;">Ended Ok</div>
<div style="position:absolute;left:915.1px;top:436.4px;width:1.2px;height:1.2px;background:#8f8f8f;border-radius:1px;"></div>
<div style="position:absolute;left:915.1px;top:439.59999999999997px;width:1.2px;height:1.2px;background:#8f8f8f;border-radius:1px;"></div>
<div style="position:absolute;left:915.1px;top:442.79999999999995px;width:1.2px;height:1.2px;background:#8f8f8f;border-radius:1px;"></div>
<div style="position:absolute;left:289.50px;top:469.35px;font-size:7.9px;color:#4a90e2;font-weight:normal;font-style:normal;letter-spacing:0px;white-space:nowrap;line-height:normal;transform:scaleX(0.8955);transform-origin:0 0;">2024-09-16 07:00</div>
<svg style="position:absolute;left:375px;top:468.5px" width="10" height="10"><path d="M2.3,3.2 L2.3,1.1 L4.3,1.1 L5,1.8 L8.6,1.8 L8.6,7.1 L7.3,7.1" fill="none" stroke="#59608a" stroke-width="0.8"/><path d="M1.2,3 L3.3,3 L4,3.7 L7,3.7 L7,8.2 L1.2,8.2 Z" fill="#1c2a5a"/></svg>
<div style="position:absolute;left:389.00px;top:469.35px;font-size:7.9px;color:#444;font-weight:normal;font-style:normal;letter-spacing:0px;white-space:nowrap;line-height:normal;transform:scaleX(0.8933);transform-origin:0 0;">Data Set Backup</div>
<div style="position:absolute;left:474.20px;top:469.35px;font-size:7.9px;color:#444;font-weight:normal;font-style:normal;letter-spacing:0px;white-space:nowrap;line-height:normal;transform:scaleX(0.8942);transform-origin:0 0;">11.8:1</div>
<div style="position:absolute;left:572.00px;top:469.35px;font-size:7.9px;color:#444;font-weight:normal;font-style:normal;letter-spacing:0px;white-space:nowrap;line-height:normal;transform:scaleX(0.9336);transform-origin:0 0;">11.87 MB</div>
<div style="position:absolute;left:671.30px;top:469.35px;font-size:7.9px;color:#444;font-weight:normal;font-style:normal;letter-spacing:0px;white-space:nowrap;line-height:normal;transform:scaleX(0.9423);transform-origin:0 0;">18s</div>
<svg style="position:absolute;left:735px;top:468.20px" width="70" height="10"><circle cx="5.6" cy="5" r="2.85" fill="#5cb85c"/><path d="M4.4,5 L5.3,5.9 L6.9,4.2" fill="none" stroke="#d8f0d8" stroke-width="0.6"/><circle cx="33" cy="5" r="2.85" fill="#f5a01a"/><path d="M33,3.6 L33,5.4 M33,6.1 L33,6.6" stroke="#ffe3b0" stroke-width="0.6"/><circle cx="60.2" cy="5" r="2.9" fill="#e3182a"/><path d="M59.3,4.1 L61.1,5.9 M61.1,4.1 L59.3,5.9" stroke="#fff" stroke-width="0.75"/></svg>
<div style="position:absolute;left:745.50px;top:469.28px;font-size:7.2px;color:#444;font-weight:normal;font-style:normal;letter-spacing:0px;white-space:nowrap;line-height:normal;">7</div>
<div style="position:absolute;left:772.80px;top:469.28px;font-size:7.2px;color:#444;font-weight:normal;font-style:normal;letter-spacing:0px;white-space:nowrap;line-height:normal;">0</div>
<div style="position:absolute;left:800.00px;top:469.28px;font-size:7.2px;color:#444;font-weight:normal;font-style:normal;letter-spacing:0px;white-space:nowrap;line-height:normal;">0</div>
<div style="position:absolute;left:833.7px;top:466.9px;width:63.3px;height:13.4px;background:#e0efc0;"></div>
<div style="position:absolute;left:849.80px;top:469.35px;font-size:7.9px;color:#6c8450;font-weight:normal;font-style:normal;letter-spacing:0px;white-space:nowrap;line-height:normal;transform:scaleX(0.8691);transform-origin:0 0;">Ended Ok</div>
<div style="position:absolute;left:915.1px;top:469.4px;width:1.2px;height:1.2px;background:#8f8f8f;border-radius:1px;"></div>
<div style="position:absolute;left:915.1px;top:472.59999999999997px;width:1.2px;height:1.2px;background:#8f8f8f;border-radius:1px;"></div>
<div style="position:absolute;left:915.1px;top:475.79999999999995px;width:1.2px;height:1.2px;background:#8f8f8f;border-radius:1px;"></div>
<div style="position:absolute;left:273px;top:490.5px;width:657px;height:33px;background:#f5f5f5;"></div>
<div style="position:absolute;left:289.50px;top:502.35px;font-size:7.9px;color:#4a90e2;font-weight:normal;font-style:normal;letter-spacing:0px;white-space:nowrap;line-height:normal;transform:scaleX(0.8955);transform-origin:0 0;">2024-09-15 07:00</div>
<svg style="position:absolute;left:375px;top:501.5px" width="10" height="10"><path d="M2.3,3.2 L2.3,1.1 L4.3,1.1 L5,1.8 L8.6,1.8 L8.6,7.1 L7.3,7.1" fill="none" stroke="#59608a" stroke-width="0.8"/><path d="M1.2,3 L3.3,3 L4,3.7 L7,3.7 L7,8.2 L1.2,8.2 Z" fill="#1c2a5a"/></svg>
<div style="position:absolute;left:389.00px;top:502.35px;font-size:7.9px;color:#444;font-weight:normal;font-style:normal;letter-spacing:0px;white-space:nowrap;line-height:normal;transform:scaleX(0.8933);transform-origin:0 0;">Data Set Backup</div>
<div style="position:absolute;left:474.20px;top:502.35px;font-size:7.9px;color:#444;font-weight:normal;font-style:normal;letter-spacing:0px;white-space:nowrap;line-height:normal;transform:scaleX(0.8942);transform-origin:0 0;">11.8:1</div>
<div style="position:absolute;left:572.00px;top:502.35px;font-size:7.9px;color:#444;font-weight:normal;font-style:normal;letter-spacing:0px;white-space:nowrap;line-height:normal;transform:scaleX(0.9336);transform-origin:0 0;">11.87 MB</div>
<div style="position:absolute;left:671.30px;top:502.35px;font-size:7.9px;color:#444;font-weight:normal;font-style:normal;letter-spacing:0px;white-space:nowrap;line-height:normal;transform:scaleX(0.9423);transform-origin:0 0;">15s</div>
<svg style="position:absolute;left:735px;top:501.20px" width="70" height="10"><circle cx="5.6" cy="5" r="2.85" fill="#5cb85c"/><path d="M4.4,5 L5.3,5.9 L6.9,4.2" fill="none" stroke="#d8f0d8" stroke-width="0.6"/><circle cx="33" cy="5" r="2.85" fill="#f5a01a"/><path d="M33,3.6 L33,5.4 M33,6.1 L33,6.6" stroke="#ffe3b0" stroke-width="0.6"/><circle cx="60.2" cy="5" r="2.9" fill="#e3182a"/><path d="M59.3,4.1 L61.1,5.9 M61.1,4.1 L59.3,5.9" stroke="#fff" stroke-width="0.75"/></svg>
<div style="position:absolute;left:745.50px;top:502.28px;font-size:7.2px;color:#444;font-weight:normal;font-style:normal;letter-spacing:0px;white-space:nowrap;line-height:normal;">7</div>
<div style="position:absolute;left:772.80px;top:502.28px;font-size:7.2px;color:#444;font-weight:normal;font-style:normal;letter-spacing:0px;white-space:nowrap;line-height:normal;">0</div>
<div style="position:absolute;left:800.00px;top:502.28px;font-size:7.2px;color:#444;font-weight:normal;font-style:normal;letter-spacing:0px;white-space:nowrap;line-height:normal;">0</div>
<div style="position:absolute;left:833.7px;top:499.9px;width:63.3px;height:13.4px;background:#e0efc0;"></div>
<div style="position:absolute;left:849.80px;top:502.35px;font-size:7.9px;color:#6c8450;font-weight:normal;font-style:normal;letter-spacing:0px;white-space:nowrap;line-height:normal;transform:scaleX(0.8691);transform-origin:0 0;">Ended Ok</div>
<div style="position:absolute;left:915.1px;top:502.4px;width:1.2px;height:1.2px;background:#8f8f8f;border-radius:1px;"></div>
<div style="position:absolute;left:915.1px;top:505.59999999999997px;width:1.2px;height:1.2px;background:#8f8f8f;border-radius:1px;"></div>
<div style="position:absolute;left:915.1px;top:508.79999999999995px;width:1.2px;height:1.2px;background:#8f8f8f;border-radius:1px;"></div>
<div style="position:absolute;left:289.50px;top:535.35px;font-size:7.9px;color:#4a90e2;font-weight:normal;font-style:normal;letter-spacing:0px;white-space:nowrap;line-height:normal;transform:scaleX(0.8955);transform-origin:0 0;">2024-09-14 07:00</div>
<svg style="position:absolute;left:375px;top:534.5px" width="10" height="10"><path d="M2.3,3.2 L2.3,1.1 L4.3,1.1 L5,1.8 L8.6,1.8 L8.6,7.1 L7.3,7.1" fill="none" stroke="#59608a" stroke-width="0.8"/><path d="M1.2,3 L3.3,3 L4,3.7 L7,3.7 L7,8.2 L1.2,8.2 Z" fill="#1c2a5a"/></svg>
<div style="position:absolute;left:389.00px;top:535.35px;font-size:7.9px;color:#444;font-weight:normal;font-style:normal;letter-spacing:0px;white-space:nowrap;line-height:normal;transform:scaleX(0.8933);transform-origin:0 0;">Data Set Backup</div>
<div style="position:absolute;left:474.20px;top:535.35px;font-size:7.9px;color:#444;font-weight:normal;font-style:normal;letter-spacing:0px;white-space:nowrap;line-height:normal;transform:scaleX(0.8942);transform-origin:0 0;">11.8:1</div>
<div style="position:absolute;left:572.00px;top:535.35px;font-size:7.9px;color:#444;font-weight:normal;font-style:normal;letter-spacing:0px;white-space:nowrap;line-height:normal;transform:scaleX(0.9336);transform-origin:0 0;">11.87 MB</div>
<div style="position:absolute;left:671.30px;top:535.35px;font-size:7.9px;color:#444;font-weight:normal;font-style:normal;letter-spacing:0px;white-space:nowrap;line-height:normal;transform:scaleX(0.9423);transform-origin:0 0;">16s</div>
<svg style="position:absolute;left:735px;top:534.20px" width="70" height="10"><circle cx="5.6" cy="5" r="2.85" fill="#5cb85c"/><path d="M4.4,5 L5.3,5.9 L6.9,4.2" fill="none" stroke="#d8f0d8" stroke-width="0.6"/><circle cx="33" cy="5" r="2.85" fill="#f5a01a"/><path d="M33,3.6 L33,5.4 M33,6.1 L33,6.6" stroke="#ffe3b0" stroke-width="0.6"/><circle cx="60.2" cy="5" r="2.9" fill="#e3182a"/><path d="M59.3,4.1 L61.1,5.9 M61.1,4.1 L59.3,5.9" stroke="#fff" stroke-width="0.75"/></svg>
<div style="position:absolute;left:745.50px;top:535.28px;font-size:7.2px;color:#444;font-weight:normal;font-style:normal;letter-spacing:0px;white-space:nowrap;line-height:normal;">7</div>
<div style="position:absolute;left:772.80px;top:535.28px;font-size:7.2px;color:#444;font-weight:normal;font-style:normal;letter-spacing:0px;white-space:nowrap;line-height:normal;">0</div>
<div style="position:absolute;left:800.00px;top:535.28px;font-size:7.2px;color:#444;font-weight:normal;font-style:normal;letter-spacing:0px;white-space:nowrap;line-height:normal;">0</div>
<div style="position:absolute;left:833.7px;top:532.9px;width:63.3px;height:13.4px;background:#e0efc0;"></div>
<div style="position:absolute;left:849.80px;top:535.35px;font-size:7.9px;color:#6c8450;font-weight:normal;font-style:normal;letter-spacing:0px;white-space:nowrap;line-height:normal;transform:scaleX(0.8691);transform-origin:0 0;">Ended Ok</div>
<div style="position:absolute;left:915.1px;top:535.4px;width:1.2px;height:1.2px;background:#8f8f8f;border-radius:1px;"></div>
<div style="position:absolute;left:915.1px;top:538.6px;width:1.2px;height:1.2px;background:#8f8f8f;border-radius:1px;"></div>
<div style="position:absolute;left:915.1px;top:541.8000000000001px;width:1.2px;height:1.2px;background:#8f8f8f;border-radius:1px;"></div>
<div style="position:absolute;left:273px;top:556.5px;width:657px;height:33px;background:#f5f5f5;"></div>
<div style="position:absolute;left:289.50px;top:568.35px;font-size:7.9px;color:#4a90e2;font-weight:normal;font-style:normal;letter-spacing:0px;white-space:nowrap;line-height:normal;transform:scaleX(0.9041);transform-origin:0 0;">2024-09-13 11:10</div>
<svg style="position:absolute;left:375px;top:567.5px" width="10" height="10"><path d="M2.3,3.2 L2.3,1.1 L4.3,1.1 L5,1.8 L8.6,1.8 L8.6,7.1 L7.3,7.1" fill="none" stroke="#59608a" stroke-width="0.8"/><path d="M1.2,3 L3.3,3 L4,3.7 L7,3.7 L7,8.2 L1.2,8.2 Z" fill="#1c2a5a"/></svg>
<div style="position:absolute;left:389.00px;top:568.35px;font-size:7.9px;color:#444;font-weight:normal;font-style:normal;letter-spacing:0px;white-space:nowrap;line-height:normal;transform:scaleX(0.8933);transform-origin:0 0;">Data Set Backup</div>
<div style="position:absolute;left:474.20px;top:568.35px;font-size:7.9px;color:#444;font-weight:normal;font-style:normal;letter-spacing:0px;white-space:nowrap;line-height:normal;transform:scaleX(0.8942);transform-origin:0 0;">11.8:1</div>
<div style="position:absolute;left:572.00px;top:568.35px;font-size:7.9px;color:#444;font-weight:normal;font-style:normal;letter-spacing:0px;white-space:nowrap;line-height:normal;transform:scaleX(0.9336);transform-origin:0 0;">11.87 MB</div>
<div style="position:absolute;left:671.30px;top:568.35px;font-size:7.9px;color:#444;font-weight:normal;font-style:normal;letter-spacing:0px;white-space:nowrap;line-height:normal;transform:scaleX(0.9423);transform-origin:0 0;">12s</div>
<svg style="position:absolute;left:735px;top:567.20px" width="70" height="10"><circle cx="5.6" cy="5" r="2.85" fill="#5cb85c"/><path d="M4.4,5 L5.3,5.9 L6.9,4.2" fill="none" stroke="#d8f0d8" stroke-width="0.6"/><circle cx="33" cy="5" r="2.85" fill="#f5a01a"/><path d="M33,3.6 L33,5.4 M33,6.1 L33,6.6" stroke="#ffe3b0" stroke-width="0.6"/><circle cx="60.2" cy="5" r="2.9" fill="#e3182a"/><path d="M59.3,4.1 L61.1,5.9 M61.1,4.1 L59.3,5.9" stroke="#fff" stroke-width="0.75"/></svg>
<div style="position:absolute;left:745.50px;top:568.28px;font-size:7.2px;color:#444;font-weight:normal;font-style:normal;letter-spacing:0px;white-space:nowrap;line-height:normal;">7</div>
<div style="position:absolute;left:772.80px;top:568.28px;font-size:7.2px;color:#444;font-weight:normal;font-style:normal;letter-spacing:0px;white-space:nowrap;line-height:normal;">0</div>
<div style="position:absolute;left:800.00px;top:568.28px;font-size:7.2px;color:#444;font-weight:normal;font-style:normal;letter-spacing:0px;white-space:nowrap;line-height:normal;">0</div>
<div style="position:absolute;left:833.7px;top:565.9px;width:63.3px;height:13.4px;background:#e0efc0;"></div>
<div style="position:absolute;left:849.80px;top:568.35px;font-size:7.9px;color:#6c8450;font-weight:normal;font-style:normal;letter-spacing:0px;white-space:nowrap;line-height:normal;transform:scaleX(0.8691);transform-origin:0 0;">Ended Ok</div>
<div style="position:absolute;left:915.1px;top:568.4px;width:1.2px;height:1.2px;background:#8f8f8f;border-radius:1px;"></div>
<div style="position:absolute;left:915.1px;top:571.6px;width:1.2px;height:1.2px;background:#8f8f8f;border-radius:1px;"></div>
<div style="position:absolute;left:915.1px;top:574.8000000000001px;width:1.2px;height:1.2px;background:#8f8f8f;border-radius:1px;"></div>
<div style="position:absolute;left:289.50px;top:601.35px;font-size:7.9px;color:#4a90e2;font-weight:normal;font-style:normal;letter-spacing:0px;white-space:nowrap;line-height:normal;transform:scaleX(0.8955);transform-origin:0 0;">2024-09-13 07:00</div>
<svg style="position:absolute;left:375px;top:600.5px" width="10" height="10"><path d="M2.3,3.2 L2.3,1.1 L4.3,1.1 L5,1.8 L8.6,1.8 L8.6,7.1 L7.3,7.1" fill="none" stroke="#59608a" stroke-width="0.8"/><path d="M1.2,3 L3.3,3 L4,3.7 L7,3.7 L7,8.2 L1.2,8.2 Z" fill="#1c2a5a"/></svg>
<div style="position:absolute;left:389.00px;top:601.35px;font-size:7.9px;color:#444;font-weight:normal;font-style:normal;letter-spacing:0px;white-space:nowrap;line-height:normal;transform:scaleX(0.8933);transform-origin:0 0;">Data Set Backup</div>
<div style="position:absolute;left:474.20px;top:601.35px;font-size:7.9px;color:#444;font-weight:normal;font-style:normal;letter-spacing:0px;white-space:nowrap;line-height:normal;transform:scaleX(0.8942);transform-origin:0 0;">11.8:1</div>
<div style="position:absolute;left:572.00px;top:601.35px;font-size:7.9px;color:#444;font-weight:normal;font-style:normal;letter-spacing:0px;white-space:nowrap;line-height:normal;transform:scaleX(0.9336);transform-origin:0 0;">0 B</div>
<div style="position:absolute;left:671.30px;top:601.35px;font-size:7.9px;color:#444;font-weight:normal;font-style:normal;letter-spacing:0px;white-space:nowrap;line-height:normal;transform:scaleX(0.9423);transform-origin:0 0;">18s</div>
<svg style="position:absolute;left:735px;top:600.20px" width="70" height="10"><circle cx="5.6" cy="5" r="2.85" fill="#5cb85c"/><path d="M4.4,5 L5.3,5.9 L6.9,4.2" fill="none" stroke="#d8f0d8" stroke-width="0.6"/><circle cx="33" cy="5" r="2.85" fill="#f5a01a"/><path d="M33,3.6 L33,5.4 M33,6.1 L33,6.6" stroke="#ffe3b0" stroke-width="0.6"/><circle cx="60.2" cy="5" r="2.9" fill="#e3182a"/><path d="M59.3,4.1 L61.1,5.9 M61.1,4.1 L59.3,5.9" stroke="#fff" stroke-width="0.75"/></svg>
<div style="position:absolute;left:745.50px;top:601.28px;font-size:7.2px;color:#444;font-weight:normal;font-style:normal;letter-spacing:0px;white-space:nowrap;line-height:normal;">7</div>
<div style="position:absolute;left:772.80px;top:601.28px;font-size:7.2px;color:#444;font-weight:normal;font-style:normal;letter-spacing:0px;white-space:nowrap;line-height:normal;">0</div>
<div style="position:absolute;left:800.00px;top:601.28px;font-size:7.2px;color:#444;font-weight:normal;font-style:normal;letter-spacing:0px;white-space:nowrap;line-height:normal;">0</div>
<div style="position:absolute;left:833.7px;top:598.9px;width:63.3px;height:13.4px;background:#e0efc0;"></div>
<div style="position:absolute;left:849.80px;top:601.35px;font-size:7.9px;color:#6c8450;font-weight:normal;font-style:normal;letter-spacing:0px;white-space:nowrap;line-height:normal;transform:scaleX(0.8691);transform-origin:0 0;">Ended Ok</div>
<div style="position:absolute;left:915.1px;top:601.4px;width:1.2px;height:1.2px;background:#8f8f8f;border-radius:1px;"></div>
<div style="position:absolute;left:915.1px;top:604.6px;width:1.2px;height:1.2px;background:#8f8f8f;border-radius:1px;"></div>
<div style="position:absolute;left:915.1px;top:607.8000000000001px;width:1.2px;height:1.2px;background:#8f8f8f;border-radius:1px;"></div>
</div>
</body></html>
